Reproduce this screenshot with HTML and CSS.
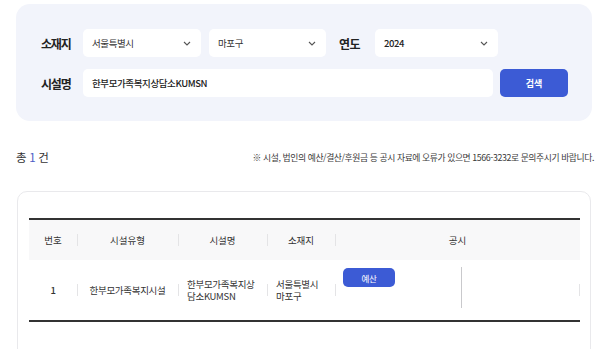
FILE: index.html
```html
<!DOCTYPE html>
<html lang="ko">
<head>
<meta charset="utf-8">
<title>시설 공시 검색</title>
<link rel="stylesheet" href="styles.css">
</head>
<body>
<div class="page">
  <section class="search">
    <div class="row">
      <span class="label">소재지</span>
      <div class="select w1"><span>서울특별시</span><svg class="chev" width="8" height="5" viewBox="0 0 8 5"><polyline points="1,1 4,4 7,1" fill="none" stroke="#555" stroke-width="1.1"/></svg></div>
      <div class="select w2"><span>마포구</span><svg class="chev" width="8" height="5" viewBox="0 0 8 5"><polyline points="1,1 4,4 7,1" fill="none" stroke="#555" stroke-width="1.1"/></svg></div>
      <span class="label label-year">연도</span>
      <div class="select w3"><span class="strong">2024</span><svg class="chev" width="8" height="5" viewBox="0 0 8 5"><polyline points="1,1 4,4 7,1" fill="none" stroke="#555" stroke-width="1.1"/></svg></div>
    </div>
    <div class="row row2">
      <span class="label">시설명</span>
      <div class="input"><span class="strong">한부모가족복지상담소KUMSN</span></div>
      <button class="btn">검색</button>
    </div>
  </section>

  <div class="summary">
    <div class="count">총 <em>1</em> 건</div>
    <div class="note">※ 시설, 법인의 예산/결산/후원금 등 공시 자료에 오류가 있으면 1566-3232로 문의주시기 바랍니다.</div>
  </div>

  <section class="card">
    <table class="tbl">
      <colgroup>
        <col class="c1"><col class="c2"><col class="c3"><col class="c4"><col class="c5"><col class="c6">
      </colgroup>
      <thead>
        <tr>
          <th>번호</th>
          <th class="sep">시설유형</th>
          <th class="sep">시설명</th>
          <th class="sep">소재지</th>
          <th class="sep" colspan="2">공시</th>
        </tr>
      </thead>
      <tbody>
        <tr>
          <td class="num">1</td>
          <td class="sep">한부모가족복지시설</td>
          <td class="sep left">한부모가족복지상<br>담소KUMSN</td>
          <td class="sep left">서울특별시<br>마포구</td>
          <td class="sep top"><span class="tag">예산</span></td>
          <td class="long end"></td>
        </tr>
      </tbody>
    </table>
  </section>
</div>
</body>
</html>
```

FILE: styles.css
```css
* { box-sizing: border-box; }
html, body { margin: 0; padding: 0; background: #fff; }
body {
  font-family: "Noto Sans CJK KR", "Noto Sans", sans-serif;
  color: #222;
  width: 606px;
  height: 349px;
  overflow: hidden;
}
.page { padding: 4px 12px 0 16px; }

.search {
  width: 576px;
  height: 117px;
  background: #f2f4fb;
  border-radius: 14px;
  padding: 25px 0 0 25px;
  display: flex;
  flex-direction: column;
  gap: 12px;
}
.row { display: flex; align-items: center; height: 28px; }
.label {
  width: 42px;
  font-size: 12px;
  font-weight: 700;
  color: #222;
  letter-spacing: -1.2px;
  white-space: nowrap;
}
.label-year { width: 36px; margin-left: 13px; letter-spacing: -0.5px; }
.select, .input {
  height: 28px;
  background: #fff;
  border-radius: 5px;
  display: flex;
  align-items: center;
  justify-content: space-between;
  padding: 0 10px 0 9px;
  font-size: 9.5px;
  color: #333;
  letter-spacing: -0.4px;
}
.w1 { width: 118px; }
.w2 { width: 117px; margin-left: 8px; }
.w3 { width: 123px; }
.strong { font-weight: 500; color: #222; }
.chev { display: block; }
.input { width: 410px; }
.btn {
  margin-left: 7px;
  width: 68px;
  height: 28px;
  border: 0;
  border-radius: 5px;
  background: #3c5bd5;
  color: #fff;
  font-family: inherit;
  font-size: 9px;
  font-weight: 700;
  padding: 0;
}

.summary {
  display: flex;
  justify-content: space-between;
  align-items: center;
  margin-top: 28px;
  height: 16px;
}
.count { font-size: 11.5px; color: #333; letter-spacing: -0.3px; }
.count em { font-style: normal; color: #4b5cc4; }
.note { font-size: 8.8px; color: #3a3a3a; letter-spacing: -0.4px; white-space: nowrap; }

.card {
  margin-top: 26px;
  margin-left: 1px;
  width: 574px;
  height: 180px;
  border: 1px solid #e9e9ec;
  border-radius: 10px;
  padding: 26px 10px 0 11px;
}
.tbl {
  width: 551px;
  border-collapse: collapse;
  table-layout: fixed;
  border-top: 2px solid #333;
  border-bottom: 2px solid #333;
  font-size: 9.5px;
  color: #333;
}
.c1 { width: 48px; } .c2 { width: 101px; } .c3 { width: 89px; }
.c4 { width: 68px; } .c5 { width: 126px; } .c6 { width: 119px; }
.tbl th {
  height: 41px;
  background: #f8f8f9;
  font-weight: 400;
  color: #333;
  text-align: center;
  position: relative;
  padding: 0;
}
.tbl td {
  height: 61px;
  text-align: center;
  position: relative;
  padding: 0;
  line-height: 12px;
  letter-spacing: -0.3px;
}
.tbl td.left { text-align: left; padding-left: 9px; }
.tbl td.num { font-weight: 500; }
.sep::before {
  content: "";
  position: absolute;
  left: 0;
  top: 50%;
  height: 12px;
  margin-top: -6px;
  border-left: 1px solid #e4e4e6;
}
.tbl td.top { vertical-align: top; text-align: left; padding: 8px 0 0 8px; }
.tag {
  display: inline-flex;
  align-items: center;
  justify-content: center;
  width: 52px;
  height: 19px;
  border-radius: 5px;
  background: #3c5bd5;
  color: #fff;
  font-size: 8.5px;
}
.long::before {
  content: "";
  position: absolute;
  left: 0;
  top: 7px;
  bottom: 12px;
  border-left: 1px solid #c9c9cc;
}
.end::after {
  content: "";
  position: absolute;
  right: 0;
  top: 50%;
  height: 12px;
  margin-top: -6px;
  border-left: 1px solid #e4e4e6;
}
```
